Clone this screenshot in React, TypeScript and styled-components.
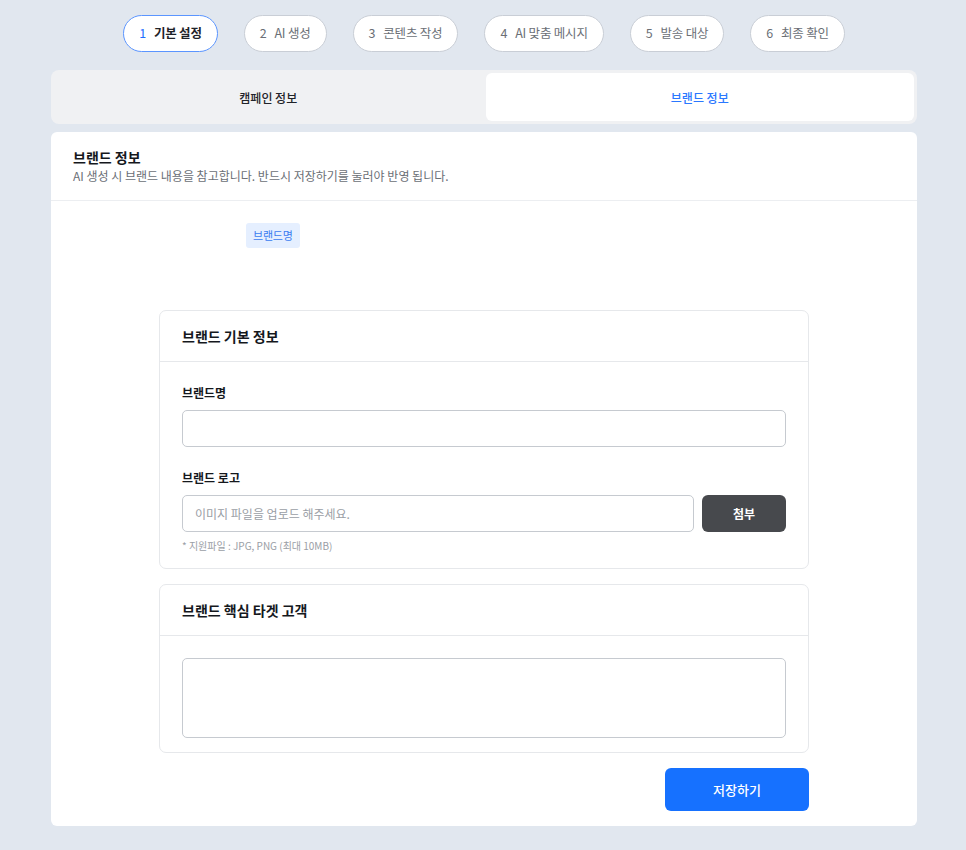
import React, { useState } from 'react'
import styled, { createGlobalStyle } from 'styled-components'

const GlobalStyle = createGlobalStyle`
  body {
    margin: 0;
    background: #e1e7ef;
    font-family: 'Noto Sans CJK KR', 'Noto Sans', sans-serif;
    color: #1f2329;
  }
`

const steps = ['기본 설정', 'AI 생성', '콘텐츠 작성', 'AI 맞춤 메시지', '발송 대상', '최종 확인']

const App = () => {
  const [tab, setTab] = useState(1)

  return (
    <>
      <GlobalStyle />
      <Page>
        <Stepper>
          {steps.map((label, i) => (
            <StepPill key={label} $active={i === 0}>
              <StepNum $active={i === 0}>{i + 1}</StepNum>
              {label}
            </StepPill>
          ))}
        </Stepper>

        <TabBar>
          <Tab $active={tab === 0} onClick={() => setTab(0)}>
            캠페인 정보
          </Tab>
          <Tab $active={tab === 1} onClick={() => setTab(1)}>
            브랜드 정보
          </Tab>
        </TabBar>

        <Card>
          <CardHead>
            <Title>브랜드 정보</Title>
            <Desc>AI 생성 시 브랜드 내용을 참고합니다. 반드시 저장하기를 눌러야 반영 됩니다.</Desc>
          </CardHead>

          <ChipRow>
            <Chip>브랜드명</Chip>
          </ChipRow>

          <Sections>
            <Section>
              <SectionHead>브랜드 기본 정보</SectionHead>
              <SectionBody>
                <Field>
                  <Label>브랜드명</Label>
                  <Input />
                </Field>
                <Field>
                  <Label>브랜드 로고</Label>
                  <FileRow>
                    <Input placeholder='이미지 파일을 업로드 해주세요.' readOnly />
                    <AttachButton>첨부</AttachButton>
                  </FileRow>
                  <Hint>* 지원파일 : JPG, PNG (최대 10MB)</Hint>
                </Field>
              </SectionBody>
            </Section>

            <Section>
              <SectionHead>브랜드 핵심 타겟 고객</SectionHead>
              <SectionBody $compact>
                <TextArea />
              </SectionBody>
            </Section>

            <Actions>
              <SaveButton>저장하기</SaveButton>
            </Actions>
          </Sections>
        </Card>
      </Page>
    </>
  )
}

const Page = styled.div`
  width: 866px;
  margin: 0 49px 0 51px;
  padding: 15px 0 24px;
`

const Stepper = styled.div`
  display: flex;
  justify-content: center;
  gap: 26px;
  margin-bottom: 18px;
`

const StepPill = styled.div<{ $active?: boolean }>`
  height: 37px;
  box-sizing: border-box;
  padding: 0 15px;
  display: flex;
  align-items: center;
  gap: 8px;
  border-radius: 19px;
  background: #fff;
  border: 1px solid ${(p) => (p.$active ? '#5b95ff' : '#c9ced6')};
  font-size: 12.5px;
  letter-spacing: -0.2px;
  line-height: 1;
  font-weight: ${(p) => (p.$active ? 700 : 400)};
  color: ${(p) => (p.$active ? '#1f2329' : '#6b6f76')};
  white-space: nowrap;
`

const StepNum = styled.span<{ $active?: boolean }>`
  font-weight: 400;
  color: ${(p) => (p.$active ? '#1f6fff' : '#6b6f76')};
`

const TabBar = styled.div`
  display: flex;
  gap: 3px;
  padding: 3px;
  background: #f0f1f3;
  border-radius: 8px;
  margin-bottom: 8px;
`

const Tab = styled.button<{ $active?: boolean }>`
  flex: 1;
  height: 48px;
  border: 0;
  border-radius: 6px;
  background: ${(p) => (p.$active ? '#fff' : 'transparent')};
  color: ${(p) => (p.$active ? '#2a78ff' : '#1f2329')};
  font-family: inherit;
  font-size: 12px;
  font-weight: 500;
  cursor: pointer;
`

const Card = styled.div`
  background: #fff;
  border-radius: 6px;
  padding-bottom: 15px;
`

const CardHead = styled.div`
  padding: 15px 22px 15px;
  border-bottom: 1px solid #eceef1;
`

const Title = styled.div`
  font-size: 14px;
  font-weight: 700;
  line-height: 20px;
  color: #15181d;
`

const Desc = styled.div`
  font-size: 12px;
  line-height: 18px;
  color: #6b6f76;
`

const ChipRow = styled.div`
  display: flex;
  padding: 22px 0 0 195px;
  height: 86px;
  box-sizing: border-box;
`

const Chip = styled.span`
  align-self: flex-start;
  padding: 0 7px;
  height: 25px;
  line-height: 25px;
  border-radius: 3px;
  background: #e5efff;
  color: #3a7cf0;
  font-size: 11px;
  letter-spacing: -0.2px;
`

const Sections = styled.div`
  width: 650px;
  margin: 23px auto 0;
  display: flex;
  flex-direction: column;
  gap: 15px;
`

const Section = styled.div`
  border: 1px solid #e6e8eb;
  border-radius: 7px;
`

const SectionHead = styled.div`
  height: 50px;
  padding: 0 22px;
  display: flex;
  align-items: center;
  font-size: 14px;
  font-weight: 700;
  color: #15181d;
  border-bottom: 1px solid #e6e8eb;
`

const SectionBody = styled.div<{ $compact?: boolean }>`
  padding: ${(p) => (p.$compact ? '22px 22px 14px' : '22px 22px 15px')};
  display: flex;
  flex-direction: column;
  gap: 22px;
`

const Field = styled.div`
  display: flex;
  flex-direction: column;
`

const Label = styled.div`
  font-size: 12px;
  font-weight: 700;
  line-height: 18px;
  margin-bottom: 8px;
  color: #15181d;
`

const Input = styled.input`
  flex: 1 1 auto;
  min-width: 0;
  height: 37px;
  box-sizing: border-box;
  border: 1px solid #c6cad0;
  border-radius: 5px;
  padding: 0 12px;
  font-family: inherit;
  font-size: 12px;
  outline: none;
  &::placeholder {
    color: #9a9ea5;
  }
`

const FileRow = styled.div`
  display: flex;
  gap: 8px;
`

const AttachButton = styled.button`
  width: 84px;
  height: 37px;
  border: 0;
  border-radius: 6px;
  background: #47494d;
  color: #fff;
  font-family: inherit;
  font-size: 12px;
  font-weight: 700;
`

const Hint = styled.div`
  margin-top: 7px;
  font-size: 10px;
  line-height: 14px;
  color: #9a9ea5;
`

const TextArea = styled.textarea`
  height: 80px;
  box-sizing: border-box;
  border: 1px solid #c6cad0;
  border-radius: 5px;
  resize: none;
  font-family: inherit;
  outline: none;
`

const Actions = styled.div`
  display: flex;
  justify-content: flex-end;
`

const SaveButton = styled.button`
  width: 144px;
  height: 43px;
  border: 0;
  border-radius: 6px;
  background: #1671ff;
  color: #fff;
  font-family: inherit;
  font-size: 13px;
  font-weight: 500;
`

export default App
